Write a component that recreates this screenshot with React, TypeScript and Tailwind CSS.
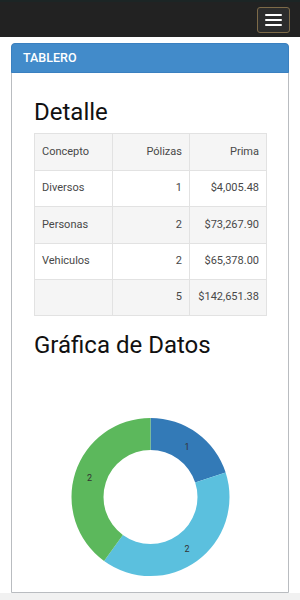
import React from "react";

const rows = [
  { concepto: "Diversos", polizas: 1, prima: "$4,005.48" },
  { concepto: "Personas", polizas: 2, prima: "$73,267.90" },
  { concepto: "Vehiculos", polizas: 2, prima: "$65,378.00" },
];

function Donut() {
  return (
    <svg width="232" height="233" viewBox="0 1 232 233" className="block">
      <path d="M116.5 60 A79 79 0 0 1 191.64 114.59 L161.2 124.48 A47 47 0 0 0 116.5 92 Z" fill="#337ab7" />
      <path d="M191.64 114.59 A79 79 0 0 1 70.06 202.91 L88.87 177.02 A47 47 0 0 0 161.2 124.48 Z" fill="#5bc0de" />
      <path d="M70.06 202.91 A79 79 0 0 1 116.5 60 L116.5 92 A47 47 0 0 0 88.87 177.02 Z" fill="#5cb85c" />
      <g fontFamily="Roboto, sans-serif" fontSize="9" fill="#333" textAnchor="middle" dominantBaseline="central">
        <text x="153" y="88.5">1</text>
        <text x="153" y="190.5">2</text>
        <text x="55.5" y="119.5">2</text>
      </g>
    </svg>
  );
}

export default function App() {
  return (
    <div className="w-[300px] h-[600px] overflow-hidden bg-white font-['Roboto',sans-serif]">
      {/* Navbar */}
      <nav className="h-[37px] bg-[#222] border-t-2 border-[#1c2525] flex items-center justify-end pr-[10px]">
        <button className="w-[33px] h-[26px] border border-[#7d6a48] bg-[#2c2c2c] rounded-[3px] flex flex-col items-center justify-center gap-[3px]">
          <span className="block w-[17px] h-[2px] bg-white rounded-[1px]" />
          <span className="block w-[17px] h-[2px] bg-white rounded-[1px]" />
          <span className="block w-[17px] h-[2px] bg-white rounded-[1px]" />
        </button>
      </nav>

      <div className="px-[11px] pt-[6px]">
        <section className="border border-[#b9bcc0] rounded-t-[4px]">
          <header className="h-[30px] -mx-px -mt-px bg-[#428bca] border border-[#3a80c0] rounded-t-[4px] px-[11px] flex items-center">
            <span className="text-white text-[12.5px] font-medium">TABLERO</span>
          </header>

          <div className="px-[22px] pt-[26px]">
            <h2 className="text-[24px] leading-[1.1] text-[#111] mb-[8px]">Detalle</h2>

            <table className="w-[232px] border-collapse text-[11px] text-[#484848] table-fixed">
              <colgroup>
                <col className="w-[78px]" />
                <col className="w-[77px]" />
                <col className="w-[77px]" />
              </colgroup>
              <thead>
                <tr className="h-[36.4px] bg-[#f5f5f5]">
                  <th className="border border-[#e2e2e2] px-[7px] text-left font-normal">Concepto</th>
                  <th className="border border-[#e2e2e2] px-[7px] text-right font-normal">Pólizas</th>
                  <th className="border border-[#e2e2e2] px-[7px] text-right font-normal">Prima</th>
                </tr>
              </thead>
              <tbody>
                {rows.map((r, i) => (
                  <tr key={r.concepto} className={"h-[36.4px] " + (i % 2 === 1 ? "bg-[#f5f5f5]" : "bg-white")}>
                    <td className="border border-[#e2e2e2] px-[7px]">{r.concepto}</td>
                    <td className="border border-[#e2e2e2] px-[7px] text-right">{r.polizas}</td>
                    <td className="border border-[#e2e2e2] px-[7px] text-right">{r.prima}</td>
                  </tr>
                ))}
                <tr className="h-[36.4px] bg-[#f5f5f5]">
                  <td className="border border-[#e2e2e2] px-[7px]"></td>
                  <td className="border border-[#e2e2e2] px-[7px] text-right">5</td>
                  <td className="border border-[#e2e2e2] px-[7px] text-right">$142,651.38</td>
                </tr>
              </tbody>
            </table>

            <h2 className="text-[24px] leading-[1.1] text-[#111] mt-[16px]">Gráfica de Datos</h2>

            <Donut />
          </div>
        </section>
      </div>

      <div className="h-[20px] bg-[#f1f1f1]" />
    </div>
  );
}
